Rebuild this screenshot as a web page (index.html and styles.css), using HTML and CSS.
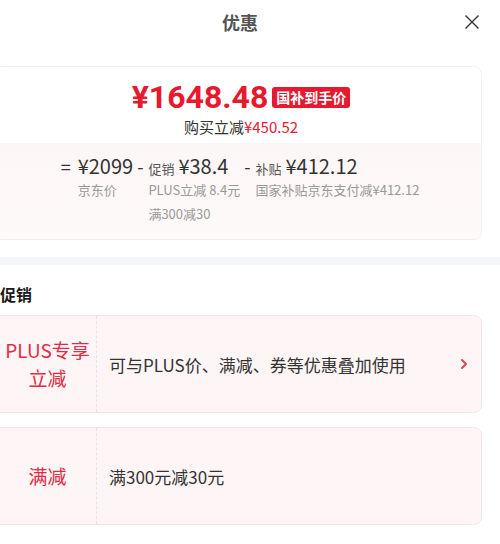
FILE: index.html
```html
<!DOCTYPE html>
<html lang="zh">
<head>
<meta charset="utf-8">
<link rel="stylesheet" href="styles.css">
</head>
<body>
<div class="sheet">
  <header class="header">
    <div class="title">优惠</div>
    <div class="close">
      <svg width="16" height="16" viewBox="0 0 16 16"><path d="M1.5 1.5 L14.5 14.5 M14.5 1.5 L1.5 14.5" stroke="#333" stroke-width="1.4" fill="none"/></svg>
    </div>
  </header>

  <section class="price-card">
    <div class="price-top">
      <div class="price-line">
        <span class="price">¥1648.48</span>
        <span class="badge">国补到手价</span>
      </div>
      <div class="save">购买立减<span class="red">¥450.52</span></div>
    </div>
    <div class="price-bottom">
      <div class="formula">
        <div class="term">
          <span class="op">=</span>
          <div class="term-body">
            <div class="term-main"><span class="val">¥2099</span></div>
            <div class="desc">京东价</div>
          </div>
        </div>
        <div class="term">
          <span class="op">-</span>
          <div class="term-body">
            <div class="term-main"><span class="name">促销</span><span class="val">¥38.4</span></div>
            <div class="desc">PLUS立减 8.4元</div>
            <div class="desc">满300减30</div>
          </div>
        </div>
        <div class="term">
          <span class="op">-</span>
          <div class="term-body">
            <div class="term-main"><span class="name">补贴</span><span class="val">¥412.12</span></div>
            <div class="desc">国家补贴京东支付减¥412.12</div>
          </div>
        </div>
      </div>
    </div>
  </section>

  <div class="band"></div>

  <h2 class="section-title">促销</h2>

  <div class="promo">
    <div class="promo-tag">PLUS专享<br>立减</div>
    <div class="promo-text">可与PLUS价、满减、券等优惠叠加使用</div>
    <div class="promo-arrow">
      <svg width="8" height="12" viewBox="0 0 8 12"><path d="M2 2 L6 6 L2 10" stroke="#e0405a" stroke-width="2" fill="none" stroke-linecap="round" stroke-linejoin="round"/></svg>
    </div>
  </div>

  <div class="promo">
    <div class="promo-tag">满减</div>
    <div class="promo-text">满300元减30元</div>
  </div>
</div>
</body>
</html>
```

FILE: styles.css
```css
* { box-sizing: border-box; }
html, body { margin: 0; padding: 0; background: #fff; }
body {
  font-family: "Noto Sans CJK SC", "Noto Sans", sans-serif;
  color: #333;
  width: 500px;
  overflow: hidden;
}
.sheet {
  padding: 0 18px 0 0;
}
.header {
  position: relative;
  height: 44px;
  display: flex;
  align-items: center;
  justify-content: center;
  margin-right: -18px;
}
.title {
  font-size: 18px;
  font-weight: 700;
  color: #555;
  margin-left: -20px;
  line-height: 24px;
}
.close {
  position: absolute;
  right: 20px;
  top: 14px;
  width: 16px;
  height: 16px;
}
.close svg { display: block; }

.price-card {
  margin: 22px 0 0 -6px;
  border: 1px solid #f3eeee;
  border-radius: 8px;
  overflow: hidden;
  background: #fff;
}
.price-top {
  height: 76px;
  padding-top: 13px;
  display: flex;
  flex-direction: column;
  align-items: center;
}
.price-line {
  display: flex;
  align-items: center;
  gap: 4px;
  height: 34px;
  margin-left: 6px;
}
.price {
  font-family: Roboto, "Noto Sans CJK SC", sans-serif;
  font-size: 32px;
  font-weight: 700;
  color: #e8192f;
  line-height: 34px;
}
.badge {
  background: #e8192f;
  color: #fff;
  font-size: 14px;
  font-weight: 700;
  line-height: 21px;
  padding: 0 4px;
  border-radius: 3px;
  margin-top: 1px;
}
.save {
  font-size: 15px;
  line-height: 20px;
  margin-top: 3px;
  color: #333;
  margin-left: 6px;
}
.red { color: #e8192f; }

.price-bottom {
  background: linear-gradient(180deg, #fdf6f6 0%, #fefafa 100%);
  padding: 11px 0 10px;
  height: 96px;
}
.formula {
  display: flex;
  justify-content: center;
  gap: 4px;
  margin-left: 4px;
}
.term {
  display: flex;
  align-items: flex-start;
}
.op {
  font-size: 18px;
  line-height: 24px;
  color: #333;
  margin-right: 5px;
}
.term:first-child .op { margin-right: 7px; }
.term-main {
  display: flex;
  align-items: baseline;
  gap: 4px;
  line-height: 24px;
  height: 24px;
}
.name {
  font-size: 13px;
  color: #555;
}
.val {
  font-size: 20px;
  color: #333;
}
.desc {
  font-size: 13px;
  color: #999;
  line-height: 24px;
}

.band {
  height: 8px;
  background: #f5f6f9;
  margin: 17px -18px 0 0;
}
.section-title {
  font-size: 16px;
  font-weight: 700;
  color: #1a1a1a;
  margin: 0;
  padding-top: 17px;
  line-height: 24px;
  height: 50px;
}
.promo {
  display: flex;
  align-items: stretch;
  height: 98px;
  margin: 0 0 14px -6px;
  background: #fdf5f6;
  border: 1px solid #f5e3e6;
  border-radius: 8px;
}
.promo-tag {
  width: 102px;
  flex: none;
  display: flex;
  align-items: center;
  justify-content: center;
  text-align: center;
  color: #e52a44;
  font-size: 19px;
  line-height: 28px;
  padding-left: 4px;
  border-right: 1px dashed #eedfe1;
}
.promo-text {
  flex: 1;
  display: flex;
  align-items: center;
  padding-left: 12px;
  font-size: 17px;
  color: #333;
}
.promo-arrow {
  width: 30px;
  display: flex;
  align-items: center;
  justify-content: center;
  padding-right: 4px;
}
.promo-arrow svg { display: block; }
```
